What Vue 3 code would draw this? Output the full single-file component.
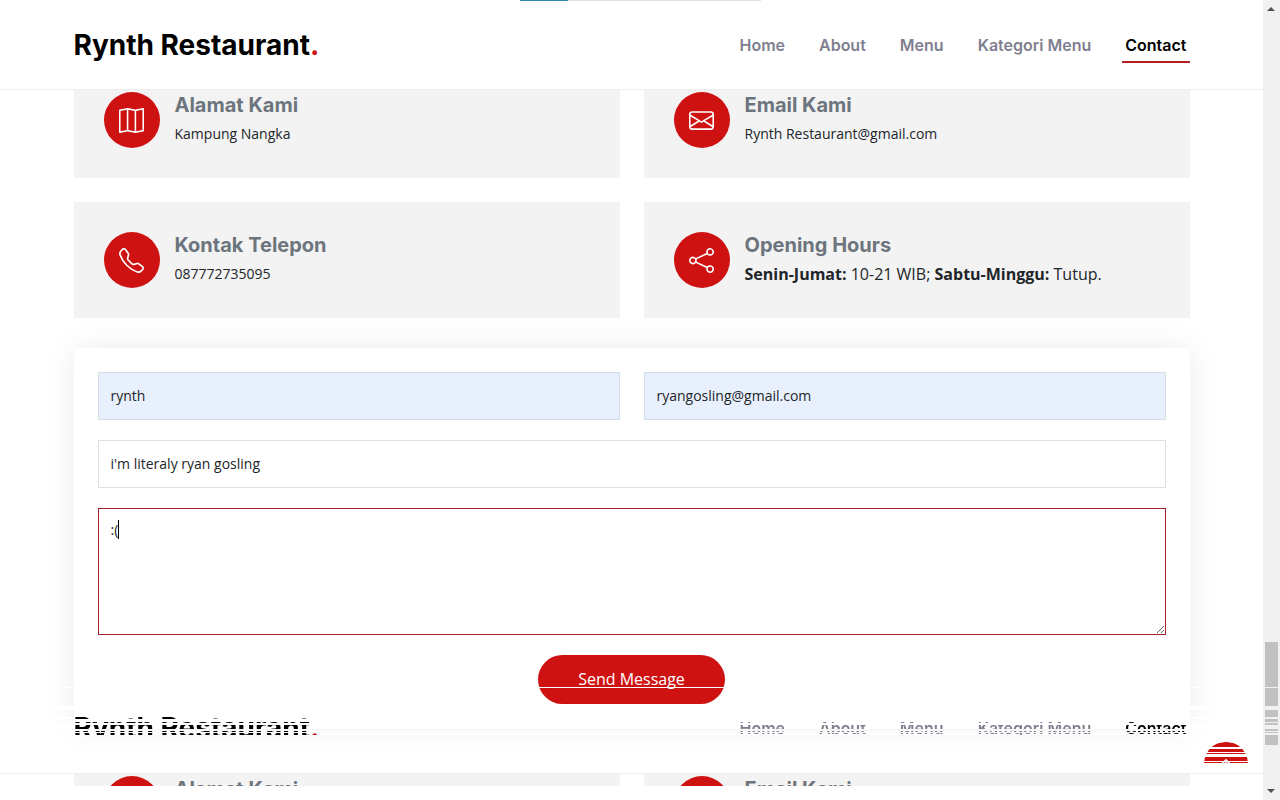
<script setup>
import { ref } from 'vue'

const links = ['Home', 'About', 'Menu', 'Kategori Menu', 'Contact']

const icons = {
  map: 'M15.817.113A.5.5 0 0 1 16 .5v14a.5.5 0 0 1-.402.49l-5 1a.502.502 0 0 1-.196 0L5.5 15.01l-4.902.98A.5.5 0 0 1 0 15.5v-14a.5.5 0 0 1 .402-.49l5-1a.5.5 0 0 1 .196 0L10.5.99l4.902-.98a.5.5 0 0 1 .415.103zM10 1.91l-4-.8v12.98l4 .8V1.91zm1 12.98 4-.8V1.11l-4 .8v12.98zm-6-.8V1.11l-4 .8v12.98l4-.8z',
  envelope: 'M0 4a2 2 0 0 1 2-2h12a2 2 0 0 1 2 2v8a2 2 0 0 1-2 2H2a2 2 0 0 1-2-2V4Zm2-1a1 1 0 0 0-1 1v.217l7 4.2 7-4.2V4a1 1 0 0 0-1-1H2Zm13 2.383-4.708 2.825L15 11.105V5.383Zm-.034 6.876-5.64-3.471L8 9.583l-1.326-.795-5.64 3.47A1 1 0 0 0 2 13h12a1 1 0 0 0 .966-.741ZM1 11.105l4.708-2.897L1 5.383v5.722Z',
  phone: 'M3.654 1.328a.678.678 0 0 0-1.015-.063L1.605 2.3c-.483.484-.661 1.169-.45 1.77a17.568 17.568 0 0 0 4.168 6.608 17.569 17.569 0 0 0 6.608 4.168c.601.211 1.286.033 1.77-.45l1.034-1.034a.678.678 0 0 0-.063-1.015l-2.307-1.794a.678.678 0 0 0-.58-.122l-2.19.547a1.745 1.745 0 0 1-1.657-.459L5.482 8.062a1.745 1.745 0 0 1-.46-1.657l.548-2.19a.678.678 0 0 0-.122-.58L3.654 1.328zM1.884.511a1.745 1.745 0 0 1 2.612.163L6.29 2.98c.329.423.445.974.315 1.494l-.547 2.19a.678.678 0 0 0 .178.643l2.457 2.457a.678.678 0 0 0 .644.178l2.189-.547a1.745 1.745 0 0 1 1.494.315l2.306 1.794c.829.645.905 1.87.163 2.611l-1.034 1.034c-.74.74-1.846 1.065-2.877.702a18.634 18.634 0 0 1-7.01-4.42 18.634 18.634 0 0 1-4.42-7.009c-.362-1.03-.037-2.137.703-2.877L1.885.511z',
  share: 'M13.5 1a1.5 1.5 0 1 0 0 3 1.5 1.5 0 0 0 0-3zM11 2.5a2.5 2.5 0 1 1 .603 1.628l-6.718 3.12a2.499 2.499 0 0 1 0 1.504l6.718 3.12a2.5 2.5 0 1 1-.488.876l-6.718-3.12a2.5 2.5 0 1 1 0-3.256l6.718-3.12A2.5 2.5 0 0 1 11 2.5zm-8.5 4a1.5 1.5 0 1 0 0 3 1.5 1.5 0 0 0 0-3zm11 5.5a1.5 1.5 0 1 0 0 3 1.5 1.5 0 0 0 0-3z',
}

const cards = [
  { icon: 'map', title: 'Alamat Kami', text: 'Kampung Nangka' },
  { icon: 'envelope', title: 'Email Kami', text: 'Rynth Restaurant@gmail.com' },
  { icon: 'phone', title: 'Kontak Telepon', text: '087772735095' },
  { icon: 'share', title: 'Opening Hours', hours: true },
]

const name = ref('rynth')
const email = ref('ryangosling@gmail.com')
const subject = ref("i'm literaly ryan gosling")
const message = ref(':(')
</script>

<template>
  <div class="window">
    <div class="page">
      <header class="header">
        <div class="container bar">
          <a class="brand" href="#">Rynth Restaurant<span>.</span></a>
          <nav class="nav">
            <a v-for="l in links" :key="l" href="#" :class="{ active: l === 'Contact' }">{{ l }}</a>
          </nav>
        </div>
      </header>

      <main class="container content">
        <section class="cards">
          <article v-for="c in cards" :key="c.title" class="card">
            <span class="badge"><svg viewBox="0 0 16 16" aria-hidden="true"><path :d="icons[c.icon]" /></svg></span>
            <div>
              <h3>{{ c.title }}</h3>
              <p v-if="c.hours" class="hours"><strong>Senin-Jumat:</strong> 10-21 WIB; <strong>Sabtu-Minggu:</strong> Tutup.</p>
              <p v-else>{{ c.text }}</p>
            </div>
          </article>
        </section>

        <form class="form" @submit.prevent>
          <div class="pair">
            <input v-model="name" class="field filled" type="text" aria-label="Name">
            <input v-model="email" class="field filled" type="email" aria-label="Email">
          </div>
          <input v-model="subject" class="field" type="text" aria-label="Subject">
          <div class="message">
            <textarea v-model="message" class="field area" aria-label="Message"></textarea>
            <span class="caret"></span>
          </div>
          <button class="send" type="submit">Send Message</button>
        </form>
      </main>

      <div class="repeat" aria-hidden="true">
        <div class="repeat-head">
          <div class="container bar">
            <a class="brand" href="#">Rynth Restaurant<span>.</span></a>
            <nav class="nav">
              <a v-for="l in links" :key="l" href="#" :class="{ active: l === 'Contact' }">{{ l }}</a>
            </nav>
          </div>
        </div>
        <div class="repeat-cards">
          <div class="container cards">
            <div v-for="c in cards.slice(0, 2)" :key="c.title" class="card">
              <span class="badge"></span>
              <h3>{{ c.title }}</h3>
            </div>
          </div>
        </div>
      </div>

      <button class="to-top" type="button" aria-label="Back to top">
        <svg viewBox="0 0 24 24" aria-hidden="true"><path d="M12 20V5M6 11l6-6 6 6" /></svg>
      </button>
      <div class="progress"><i></i></div>
    </div>

    <div class="scrollbar" aria-hidden="true">
      <i class="up"></i>
      <i class="thumb"></i>
      <i class="down"></i>
    </div>
  </div>
</template>

<style>
body { margin: 0; background: #fff; }
</style>

<style scoped>
* { box-sizing: border-box; }
.window {
  display: grid;
  grid-template-columns: minmax(0, 1fr) 17px;
  min-height: 100vh;
  font-family: "Open Sans", sans-serif;
  color: #212529;
}
.page { position: relative; overflow: hidden; }
.container { width: calc(100% - 48px); max-width: 1116px; margin: 0 auto; }

.header { position: relative; z-index: 2; background: #fff; border-bottom: 1px solid #eee; }
.bar { display: flex; align-items: center; justify-content: space-between; height: 89px; }
.brand { font: 700 28px/34px Inter, sans-serif; color: #000; text-decoration: none; }
.brand span { color: #ce1212; }
.nav { display: flex; gap: 28px; }
.nav a {
  padding: 7px 3px 4px;
  border-bottom: 2px solid transparent;
  font: 600 16px/24px Inter, sans-serif;
  color: #7f7f90;
  text-decoration: none;
}
.nav .active { color: #000; border-bottom-color: #b01c20; }

.cards { display: grid; grid-template-columns: 1fr 1fr; gap: 24px; }
.content .cards { margin-top: -28px; }
.card { display: flex; gap: 15px; padding: 30px; background: #f3f3f3; }
.badge {
  display: flex;
  flex: none;
  align-items: center;
  justify-content: center;
  width: 56px;
  height: 56px;
  border-radius: 50%;
  background: #ce1212;
}
.badge svg { width: 25px; height: 25px; fill: #fff; }
h3 { margin: 0 0 4px; font: 700 20px/26px Inter, sans-serif; color: #6c757d; }
.card p { margin: 0; font-size: 14px; line-height: 24px; }
.card .hours { font-size: 16px; }

.form {
  display: flex;
  flex-direction: column;
  gap: 20px;
  margin-top: 30px;
  padding: 24px;
  background: #fff;
  box-shadow: 0 0 30px rgba(0, 0, 0, 0.08);
}
.pair { display: grid; grid-template-columns: 1fr 1fr; gap: 24px; }
.field {
  display: block;
  width: 100%;
  height: 48px;
  padding: 0 12px 2px;
  border: 1px solid #dee2e6;
  border-radius: 0;
  outline: none;
  background: #fff;
  font: 14px/21px "Open Sans", sans-serif;
  color: #212529;
}
.filled { background: #e8f0fe; border-color: #d5dce8; }
.message { position: relative; }
.area { height: 127px; padding: 10px 12px; border-color: #a52228; resize: vertical; }
.caret { position: absolute; left: 20px; top: 12px; width: 1px; height: 19px; background: #000; }
.send {
  align-self: center;
  padding: 12px 40px 13px;
  border: 0;
  border-radius: 50px;
  background: #ce1212;
  font: 16px/24px "Open Sans", sans-serif;
  color: #fff;
}

/* Interlaced second copy of the page top */
.repeat { position: absolute; left: 0; right: 0; bottom: 0; height: 113px; }
.repeat-head {
  height: 48px;
  overflow: hidden;
  background: #fff;
  mask-image: linear-gradient(#000 1px, transparent 1px 19px, #000 19px 23px, transparent 23px 30px, #000 30px 32px, transparent 32px 35px, #000 35px 36px, transparent 36px 38px, #000 38px 42px, transparent 42px 44px, #000 44px 45px, transparent 45px 46px, #000 46px);
}
.repeat-head .bar { margin-top: -4px; }
.repeat-cards { height: 13px; margin-top: 38px; border-top: 1px solid #eee; overflow: hidden; }
.repeat-cards .cards { margin-top: -28px; }

.to-top {
  position: absolute;
  right: 15px;
  bottom: 37px;
  display: flex;
  justify-content: center;
  align-items: flex-start;
  width: 44px;
  height: 21px;
  padding: 14px 0 0;
  overflow: hidden;
  border: 0;
  border-radius: 22px 22px 0 0;
  background: #ce1212;
  mask-image: linear-gradient(#000 5px, transparent 5px 7px, #000 7px 10px, transparent 10px 11px, #000 11px 12px, transparent 12px 15px, #000 15px 19px, transparent 19px 20px, #000 20px);
}
.to-top svg { flex: none; width: 18px; height: 18px; fill: none; stroke: #fff; stroke-width: 2; }

.progress { position: absolute; z-index: 3; top: 0; left: 520px; width: 241px; height: 1px; background: #e0e0e0; }
.progress i { display: block; width: 20%; height: 1px; background: #3388b5; }

.scrollbar { position: relative; background: #f1f1f1; }
.scrollbar i { position: absolute; }
.up, .down { left: 4px; border: 4px solid transparent; }
.up { top: 3px; border-bottom-color: #505050; }
.down { bottom: 3px; border-top-color: #505050; }
.thumb {
  left: 2px;
  right: 2px;
  bottom: 55px;
  height: 103px;
  background: linear-gradient(#c1c1c1 45px, transparent 45px 46px, #c1c1c1 46px 64px, transparent 64px 68px, #c1c1c1 68px 75px, transparent 75px 77px, #c1c1c1 77px 80px, transparent 80px 81px, #c1c1c1 81px 83px, transparent 83px 87px, #c1c1c1 87px 89px, transparent 89px 90px, #c1c1c1 90px 91px, transparent 91px 93px, #c1c1c1 93px);
}
</style>
